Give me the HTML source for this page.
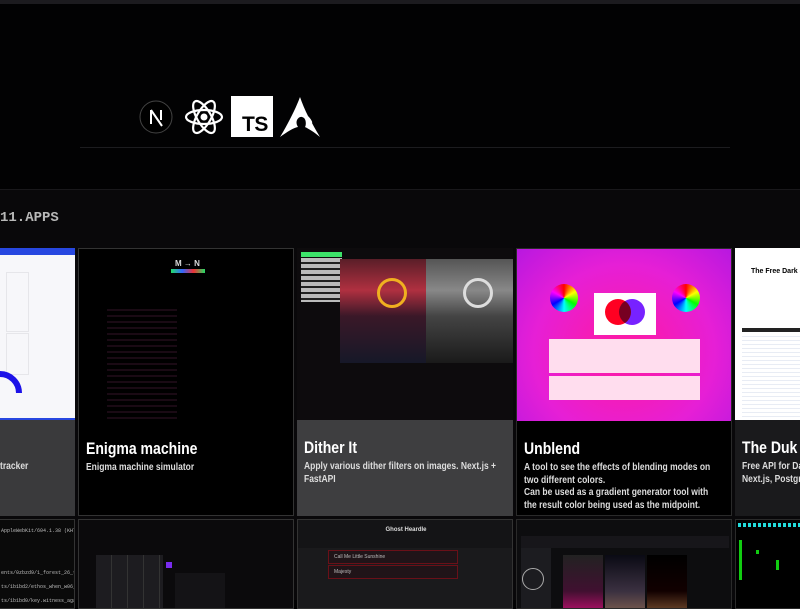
<!DOCTYPE html>
<html><head><meta charset="utf-8">
<style>
*{margin:0;padding:0;box-sizing:border-box}
body{width:800px;height:600px;overflow:hidden;background:#020203;font-family:"Liberation Sans","DejaVu Sans",sans-serif;position:relative}
.abs{position:absolute}
.card{position:absolute;overflow:hidden}
.img{position:absolute;left:0;top:0;width:100%;height:172px;overflow:hidden}
.txt{position:absolute;left:0;top:172px;width:100%;height:96px;padding:19px 7px 0 7px;color:#fff}
.in{transform:scaleX(0.85);transform-origin:0 0;width:117%}
.txt h3{font-size:16.5px;font-weight:bold;margin-bottom:3px}
.txt p{font-size:10px;line-height:12.5px;color:#ddd;font-weight:bold}
.mono{font-family:"Liberation Mono",monospace}
</style></head><body>
<div class="abs" style="left:0;top:0;width:800px;height:4px;background:#1c1b1f"></div>

<svg class="abs" style="left:139px;top:100px" width="36" height="36" viewBox="0 0 36 36">
<circle cx="17" cy="17" r="16" fill="#000" stroke="#444" stroke-width="1"/>
<path d="M12 10v14M12 10l11 16M22 10v10" stroke="#fff" stroke-width="2" fill="none"/>
</svg>
<svg class="abs" style="left:183px;top:97px" width="42" height="40" viewBox="-21 -20 42 40">
<g fill="none" stroke="#fff" stroke-width="2.2">
<ellipse rx="18" ry="7"/><ellipse rx="18" ry="7" transform="rotate(60)"/><ellipse rx="18" ry="7" transform="rotate(120)"/>
</g><circle r="3.5" fill="#fff"/>
</svg>
<div class="abs" style="left:231px;top:96px;width:42px;height:41px;background:#fff"></div>
<div class="abs" style="left:242px;top:113px;font-size:21px;font-weight:bold;color:#000;letter-spacing:-0.5px">TS</div>
<svg class="abs" style="left:279px;top:96px" width="42" height="42" viewBox="0 0 42 42">
<path d="M21 1 C17 12 9 28 1 41 C8 36 14 32 19 31 C15 25 20 20 23 21 C28 22 27 30 26 31 C30 33 35 36 41 41 C38 36 35 31 33 27 C34 26 31 22 29 20 C26 14 23 7 21 1Z" fill="#fff"/>
</svg>
<div class="abs" style="left:80px;top:147px;width:650px;height:1px;background:#1c1c1f"></div>

<div class="abs" style="left:0;top:189px;width:800px;height:411px;background:#09080a;border-top:1px solid #19181b"></div>
<div class="abs mono" style="left:0;top:210px;font-size:14px;font-weight:bold;color:#b8b8b8">11.APPS</div>

<div class="card" style="left:-142px;top:248px;width:217px;height:268px">
 <div class="img" style="background:#f7f7fa;border-top:7px solid #2747e0;border-bottom:2px solid #2747e0">
  <div class="abs" style="left:148px;top:17px;width:23px;height:60px;border:1px solid #e6e6ea"></div>
  <div class="abs" style="left:148px;top:78px;width:23px;height:42px;border:1px solid #e6e6ea"></div>
  <div class="abs" style="left:120px;top:116px;width:44px;height:44px;border-radius:50%;border:6px solid #1d12e8;clip-path:inset(0 0 50% 0)"></div>
 </div>
 <div class="txt" style="background:#3a3a3c;padding-left:142px"><div class="in"><h3>&nbsp;</h3><p>tracker</p></div></div>
</div>

<div class="card" style="left:78px;top:248px;width:216px;height:268px;background:#000;border:1px solid #333">
 <div class="img" style="background:#000">
  <div class="abs" style="left:96px;top:10px;color:#ddd;font-size:8px;font-weight:bold">M → N</div>
  <div class="abs" style="left:92px;top:20px;width:34px;height:4px;background:linear-gradient(90deg,#2d6,#36f,#e33,#2d6)"></div>
  <div class="abs" style="left:28px;top:60px;width:70px;height:110px;background:repeating-linear-gradient(0deg,#1a0a14 0 2px,#000 2px 6px)"></div>
 </div>
 <div class="txt" style="background:#000"><div class="in"><h3>Enigma machine</h3><p>Enigma machine simulator</p></div></div>
</div>

<div class="card" style="left:297px;top:248px;width:216px;height:268px">
 <div class="img" style="background:#0d0b0d">
  <div class="abs" style="left:4px;top:4px;width:41px;height:5px;background:#3de36a"></div>
  <div class="abs" style="left:4px;top:10px;width:41px;height:44px;background:repeating-linear-gradient(180deg,#bbb 0 4px,#222 4px 6px)"></div>
  <div class="abs" style="left:43px;top:11px;width:86px;height:104px;background:linear-gradient(180deg,#5a1e28,#b03040 30%,#3a1828 55%,#161828)"></div>
  <div class="abs" style="left:129px;top:11px;width:87px;height:104px;background:linear-gradient(180deg,#555,#888 30%,#444 55%,#1a1a1a)"></div>
  <div class="abs" style="left:80px;top:30px;width:30px;height:30px;border-radius:50%;border:3px solid #f0b020"></div>
  <div class="abs" style="left:166px;top:30px;width:30px;height:30px;border-radius:50%;border:3px solid #ddd"></div>
 </div>
 <div class="txt" style="background:#3e3e40"><div class="in"><h3>Dither It</h3><p>Apply various dither filters on images. Next.js + FastAPI</p></div></div>
</div>

<div class="card" style="left:516px;top:248px;width:216px;height:268px;background:#000;border:1px solid #2a2a2a">
 <div class="img" style="background:radial-gradient(ellipse at 50% 60%,#ff1aa0,#e61fd6 60%,#b818e0)">
  <div class="abs" style="left:33px;top:35px;width:28px;height:28px;border-radius:50%;background:conic-gradient(red,yellow,lime,cyan,blue,magenta,red)"></div>
  <div class="abs" style="left:155px;top:35px;width:28px;height:28px;border-radius:50%;background:conic-gradient(red,yellow,lime,cyan,blue,magenta,red)"></div>
  <div class="abs" style="left:77px;top:44px;width:62px;height:42px;background:#fff"></div>
  <div class="abs" style="left:88px;top:50px;width:26px;height:26px;border-radius:50%;background:#f02"></div>
  <div class="abs" style="left:102px;top:50px;width:26px;height:26px;border-radius:50%;background:#72f;mix-blend-mode:multiply"></div>
  <div class="abs" style="left:32px;top:90px;width:151px;height:34px;background:#fde"></div>
  <div class="abs" style="left:32px;top:127px;width:151px;height:24px;background:#fde"></div>
 </div>
 <div class="txt" style="background:#000"><div class="in"><h3>Unblend</h3><p>A tool to see the effects of blending modes on two different colors.<br>Can be used as a gradient generator tool with the result color being used as the midpoint.</p></div></div>
</div>

<div class="card" style="left:735px;top:248px;width:216px;height:268px">
 <div class="img" style="background:#fff">
  <div class="abs" style="left:16px;top:20px;font-size:7px;font-weight:bold;color:#000">The Free Dark S</div>
  <div class="abs" style="left:7px;top:80px;width:60px;height:4px;background:#222"></div>
  <div class="abs" style="left:7px;top:88px;width:60px;height:90px;background:repeating-linear-gradient(180deg,#e8ecf4 0 1px,#fff 1px 4px)"></div>
 </div>
 <div class="txt" style="background:#1a1a1c"><div class="in"><h3>The Duk</h3><p>Free API for Da<br>Next.js, Postgre</p></div></div>
</div>

<div class="card" style="left:-142px;top:519px;width:217px;height:90px;background:#0a0a0a;border:1px solid #333">
 <div class="mono abs" style="left:142px;top:4px;font-size:5px;line-height:14px;color:#bbb;white-space:nowrap">AppleWebKit/604.1.38 (KHTML<br><br><br>ents/0zbzd9/1_forest_26_tida<br>ts/1b1bd2/ethos_when_w06_a_gf<br>ts/1b1bd0/key.witness_against</div>
</div>
<div class="card" style="left:78px;top:519px;width:216px;height:90px;background:#0b0a0c;border:1px solid #333">
 <div class="abs" style="left:17px;top:35px;width:67px;height:60px;background:repeating-linear-gradient(90deg,#1d1c20 0 15px,#333 15px 16px)"></div>
 <div class="abs" style="left:87px;top:42px;width:6px;height:6px;background:#7a2cf0"></div>
 <div class="abs" style="left:96px;top:53px;width:50px;height:40px;background:#141316"></div>
</div>
<div class="card" style="left:297px;top:519px;width:216px;height:90px;background:#1a1a1c;border:1px solid #333">
 <div class="abs" style="left:0;top:0;width:216px;height:28px;background:#141416;color:#ddd;font-size:6px;font-weight:bold;text-align:center;line-height:20px">Ghost Heardle</div>
 <div class="abs" style="left:30px;top:30px;width:130px;height:14px;border:1px solid #6a1018;background:#201418;color:#bbb;font-size:5px;line-height:12px;padding-left:5px">Call Me Little Sunshine</div>
 <div class="abs" style="left:30px;top:45px;width:130px;height:14px;border:1px solid #6a1018;background:#201418;color:#bbb;font-size:5px;line-height:12px;padding-left:5px">Majesty</div>
</div>
<div class="card" style="left:516px;top:519px;width:216px;height:90px;background:#0d0d0f;border:1px solid #2a2a2a">
 <div class="abs" style="left:4px;top:16px;width:208px;height:12px;background:#17161a"></div>
 <div class="abs" style="left:4px;top:28px;width:30px;height:60px;background:#1c1c20"></div>
 <div class="abs" style="left:5px;top:48px;width:22px;height:22px;border-radius:50%;border:1px solid #aaa"></div>
 <div class="abs" style="left:46px;top:35px;width:40px;height:60px;background:linear-gradient(180deg,#222,#401030 60%,#c01070)"></div>
 <div class="abs" style="left:88px;top:35px;width:40px;height:60px;background:linear-gradient(180deg,#0a0a14,#3a3040 60%,#806050)"></div>
 <div class="abs" style="left:130px;top:35px;width:40px;height:60px;background:linear-gradient(180deg,#000,#100 60%,#7a5030)"></div>
</div>
<div class="card" style="left:735px;top:519px;width:216px;height:90px;background:#000;border:1px solid #2a2a2a">
 <div class="abs" style="left:2px;top:3px;width:64px;height:4px;background:repeating-linear-gradient(90deg,#2dd 0 3px,#000 3px 5px)"></div>
 <div class="abs" style="left:3px;top:20px;width:3px;height:40px;background:#1c1"></div>
 <div class="abs" style="left:20px;top:30px;width:3px;height:4px;background:#1c1"></div>
 <div class="abs" style="left:40px;top:40px;width:3px;height:10px;background:#1c1"></div>
</div>
</body></html>
